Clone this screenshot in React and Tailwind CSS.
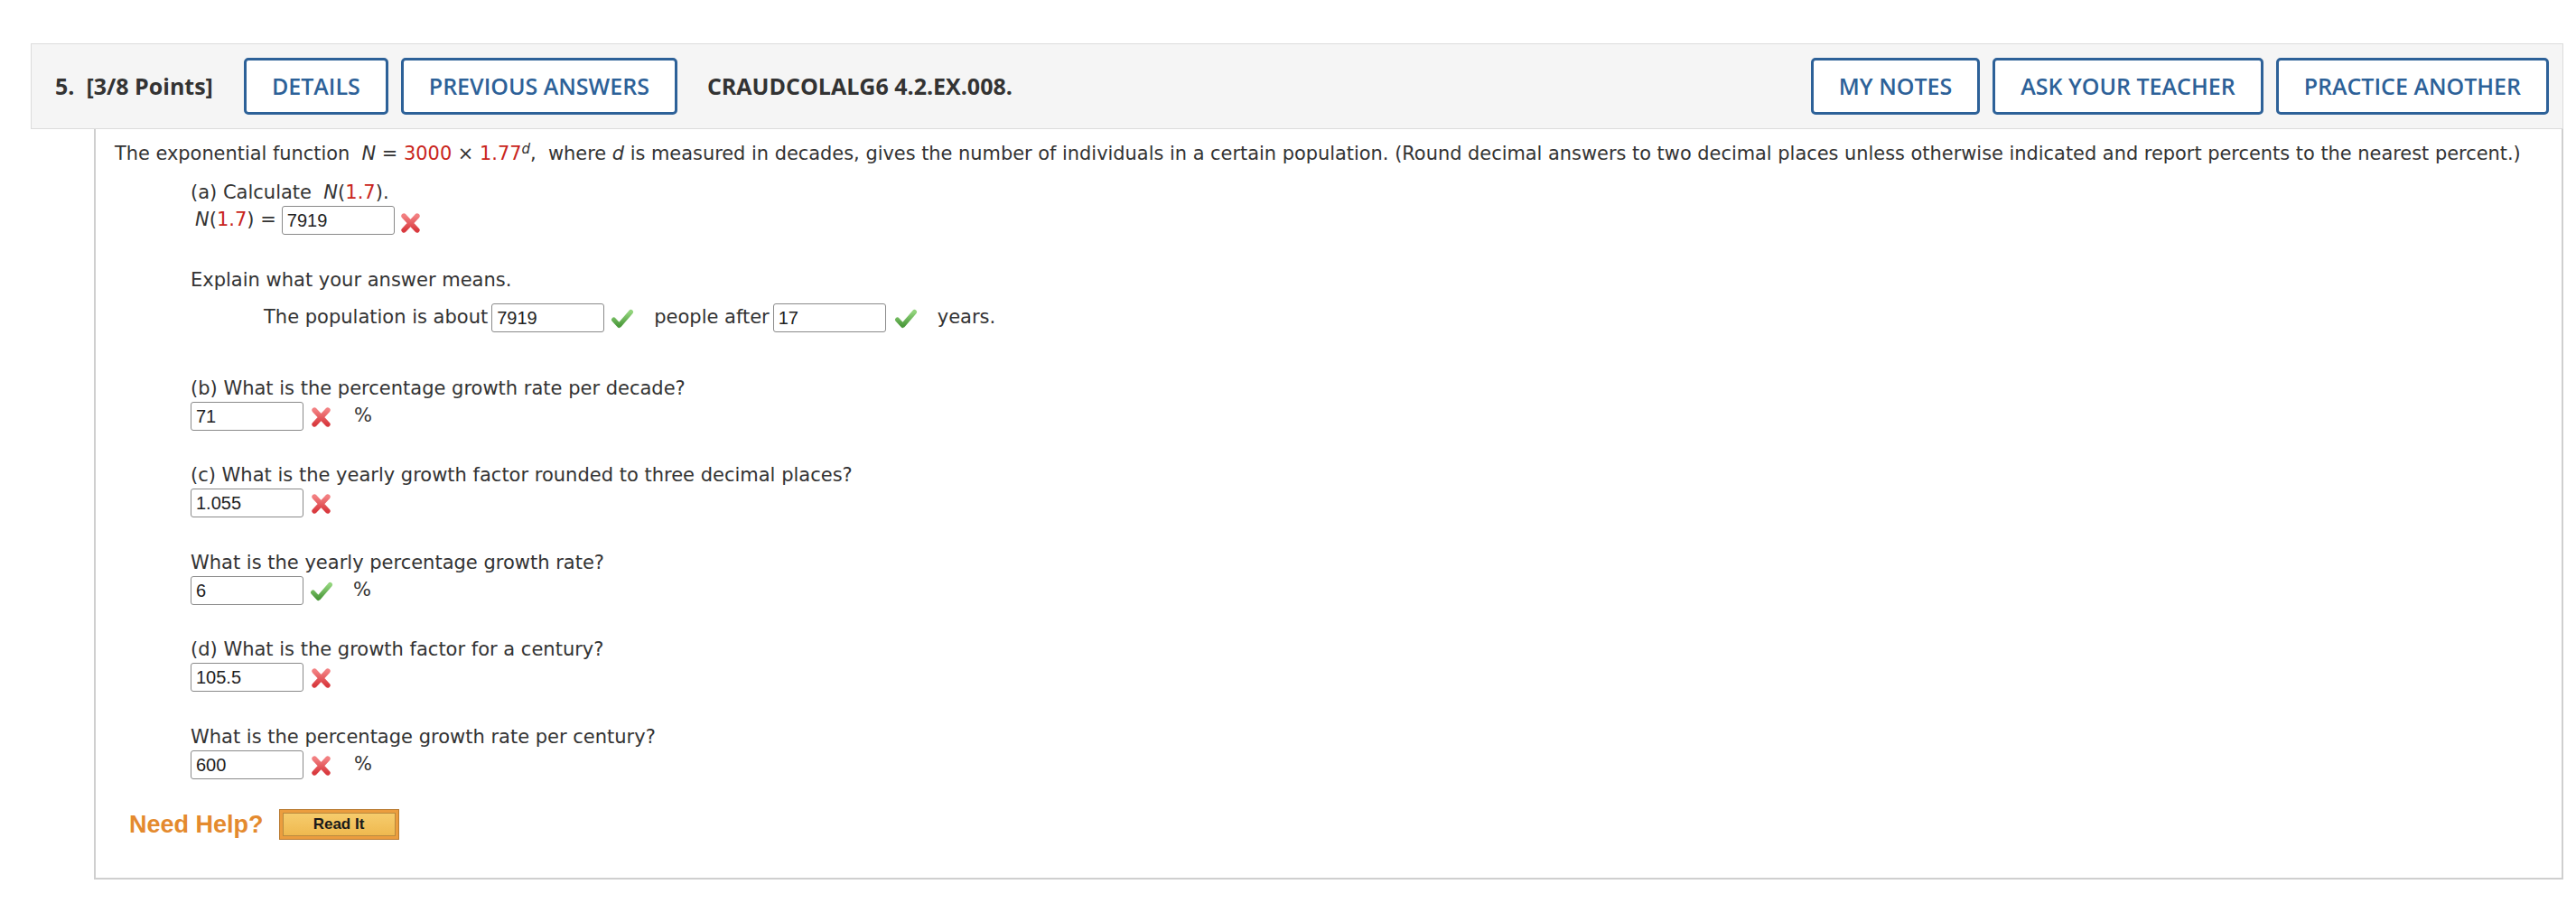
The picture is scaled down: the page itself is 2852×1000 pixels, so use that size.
import React from "react";

const txt = { fontFamily: '"DejaVu Sans", Verdana, sans-serif' };

function Wrong() {
  return (
    <svg width="25" height="25" viewBox="0 0 24 24" className="shrink-0">
      <defs>
        <linearGradient id="xg" x1="0" y1="0" x2="0" y2="1">
          <stop offset="0" stopColor="#f27f81" />
          <stop offset="1" stopColor="#d93a3f" />
        </linearGradient>
      </defs>
      <path d="M5 5 L19 20 M19 5 L5 20" stroke="url(#xg)" strokeWidth="5.5" strokeLinecap="round" fill="none" />
    </svg>
  );
}

function Right() {
  return (
    <svg width="26" height="24" viewBox="0 0 26 24" className="shrink-0">
      <defs>
        <linearGradient id="cg" x1="0" y1="0" x2="0" y2="1">
          <stop offset="0" stopColor="#92d47c" />
          <stop offset="1" stopColor="#4c9a3c" />
        </linearGradient>
      </defs>
      <path d="M3.5 14 L9.5 20.5 L22.5 5.5" stroke="url(#cg)" strokeWidth="5" strokeLinecap="round" strokeLinejoin="round" fill="none" />
    </svg>
  );
}

function Box({ value }) {
  return (
    <div
      className="w-[125px] h-[32px] border border-[#8a8a8a] rounded-[3px] bg-white pl-[5px] flex items-center text-[20px] text-[#222] shrink-0"
      style={{ fontFamily: '"Liberation Sans", Arial, sans-serif' }}
    >
      {value}
    </div>
  );
}

function HeadBtn({ children }) {
  return (
    <div className="h-[63px] px-[28px] flex items-center border-[3px] border-[#2d6198] rounded-[5px] bg-white text-[#2d6198] text-[25px] font-semibold whitespace-nowrap">
      {children}
    </div>
  );
}

function Red({ children }) {
  return <span className="text-[#c9251c]">{children}</span>;
}

function Label({ children, mt }) {
  return <div className={`h-[28px] leading-[28px] ${mt}`}>{children}</div>;
}

export default function App() {
  return (
    <div className="w-[2852px] h-[1000px] bg-white pt-[48px] pl-[34px] pr-[14px]">
      {/* header */}
      <div
        className="h-[95px] bg-[#f5f5f5] border border-[#dcdcdc] flex items-center pl-[26px] pr-[15px]"
        style={{ fontFamily: '"Open Sans", sans-serif' }}
      >
        <span className="text-[25px] font-bold text-[#333] whitespace-nowrap">5.&nbsp; [3/8 Points]</span>
        <div className="ml-[34px] flex gap-[14px]">
          <HeadBtn>DETAILS</HeadBtn>
          <HeadBtn>PREVIOUS ANSWERS</HeadBtn>
        </div>
        <span className="ml-[33px] text-[25px] font-bold text-[#333]">CRAUDCOLALG6 4.2.EX.008.</span>
        <div className="ml-auto flex gap-[14px]">
          <HeadBtn>MY NOTES</HeadBtn>
          <HeadBtn>ASK YOUR TEACHER</HeadBtn>
          <HeadBtn>PRACTICE ANOTHER</HeadBtn>
        </div>
      </div>

      {/* body */}
      <div className="ml-[70px] h-[831px] border-x-2 border-b-2 border-[#cfcfcf] pl-[21px] pt-[13px] text-[21px] text-[#333]" style={txt}>
        <div className="h-[28px] leading-[28px] whitespace-nowrap text-[20.9px]">
          The exponential function&nbsp; <i>N</i> = <Red>3000</Red> × <Red>1.77</Red>
          <sup className="text-[15px] italic">d</sup>,&nbsp; where <i>d</i> is measured in decades, gives the number of
          individuals in a certain population. (Round decimal answers to two decimal places unless otherwise indicated
          and report percents to the nearest percent.)
        </div>

        <div className="pl-[84px]">
          <Label mt="mt-[15px]">
            (a) Calculate&nbsp; <i>N</i>(<Red>1.7</Red>).
          </Label>
          <div className="h-[34px] flex items-center pl-[5px]">
            <span className="mr-[6px]">
              <i>N</i>(<Red>1.7</Red>) =
            </span>
            <Box value="7919" />
            <span className="ml-[5px] mt-[4px]">
              <Wrong />
            </span>
          </div>

          <Label mt="mt-[35px]">Explain what your answer means.</Label>
          <div className="mt-[11px] h-[34px] flex items-center pl-[81px]">
            <span className="mr-[4px]">The population is about</span>
            <Box value="7919" />
            <span className="ml-[7px]">
              <Right />
            </span>
            <span className="ml-[22px] mr-[4px]">people after</span>
            <Box value="17" />
            <span className="ml-[9px]">
              <Right />
            </span>
            <span className="ml-[22px]">years.</span>
          </div>

          <Label mt="mt-[47px]">(b) What is the percentage growth rate per decade?</Label>
          <div className="h-[34px] flex items-center">
            <Box value="71" />
            <span className="ml-[7px]">
              <Wrong />
            </span>
            <span className="ml-[24px]">%</span>
          </div>

          <Label mt="mt-[34px]">(c) What is the yearly growth factor rounded to three decimal places?</Label>
          <div className="h-[34px] flex items-center">
            <Box value="1.055" />
            <span className="ml-[7px]">
              <Wrong />
            </span>
          </div>

          <Label mt="mt-[35px]">What is the yearly percentage growth rate?</Label>
          <div className="h-[34px] flex items-center">
            <Box value="6" />
            <span className="ml-[7px]">
              <Right />
            </span>
            <span className="ml-[22px]">%</span>
          </div>

          <Label mt="mt-[34px]">(d) What is the growth factor for a century?</Label>
          <div className="h-[34px] flex items-center">
            <Box value="105.5" />
            <span className="ml-[7px]">
              <Wrong />
            </span>
          </div>

          <Label mt="mt-[35px]">What is the percentage growth rate per century?</Label>
          <div className="h-[34px] flex items-center">
            <Box value="600" />
            <span className="ml-[7px]">
              <Wrong />
            </span>
            <span className="ml-[24px]">%</span>
          </div>
        </div>

        <div className="mt-[32px] ml-[16px] flex items-center h-[34px]" style={{ fontFamily: '"Liberation Sans", Arial, sans-serif' }}>
          <span className="text-[27px] font-bold text-[#e48a2e]">Need Help?</span>
          <div className="ml-[17px] w-[133px] h-[34px] border border-[#b97a30] bg-[#eb9d3e] p-[3px] flex">
            <div className="flex-1 border border-[#b98a3e] bg-gradient-to-b from-[#f6cc6c] to-[#efb94f] flex items-center justify-center text-[17px] font-bold text-[#1a1a1a]">
              Read It
            </div>
          </div>
        </div>
      </div>
    </div>
  );
}
